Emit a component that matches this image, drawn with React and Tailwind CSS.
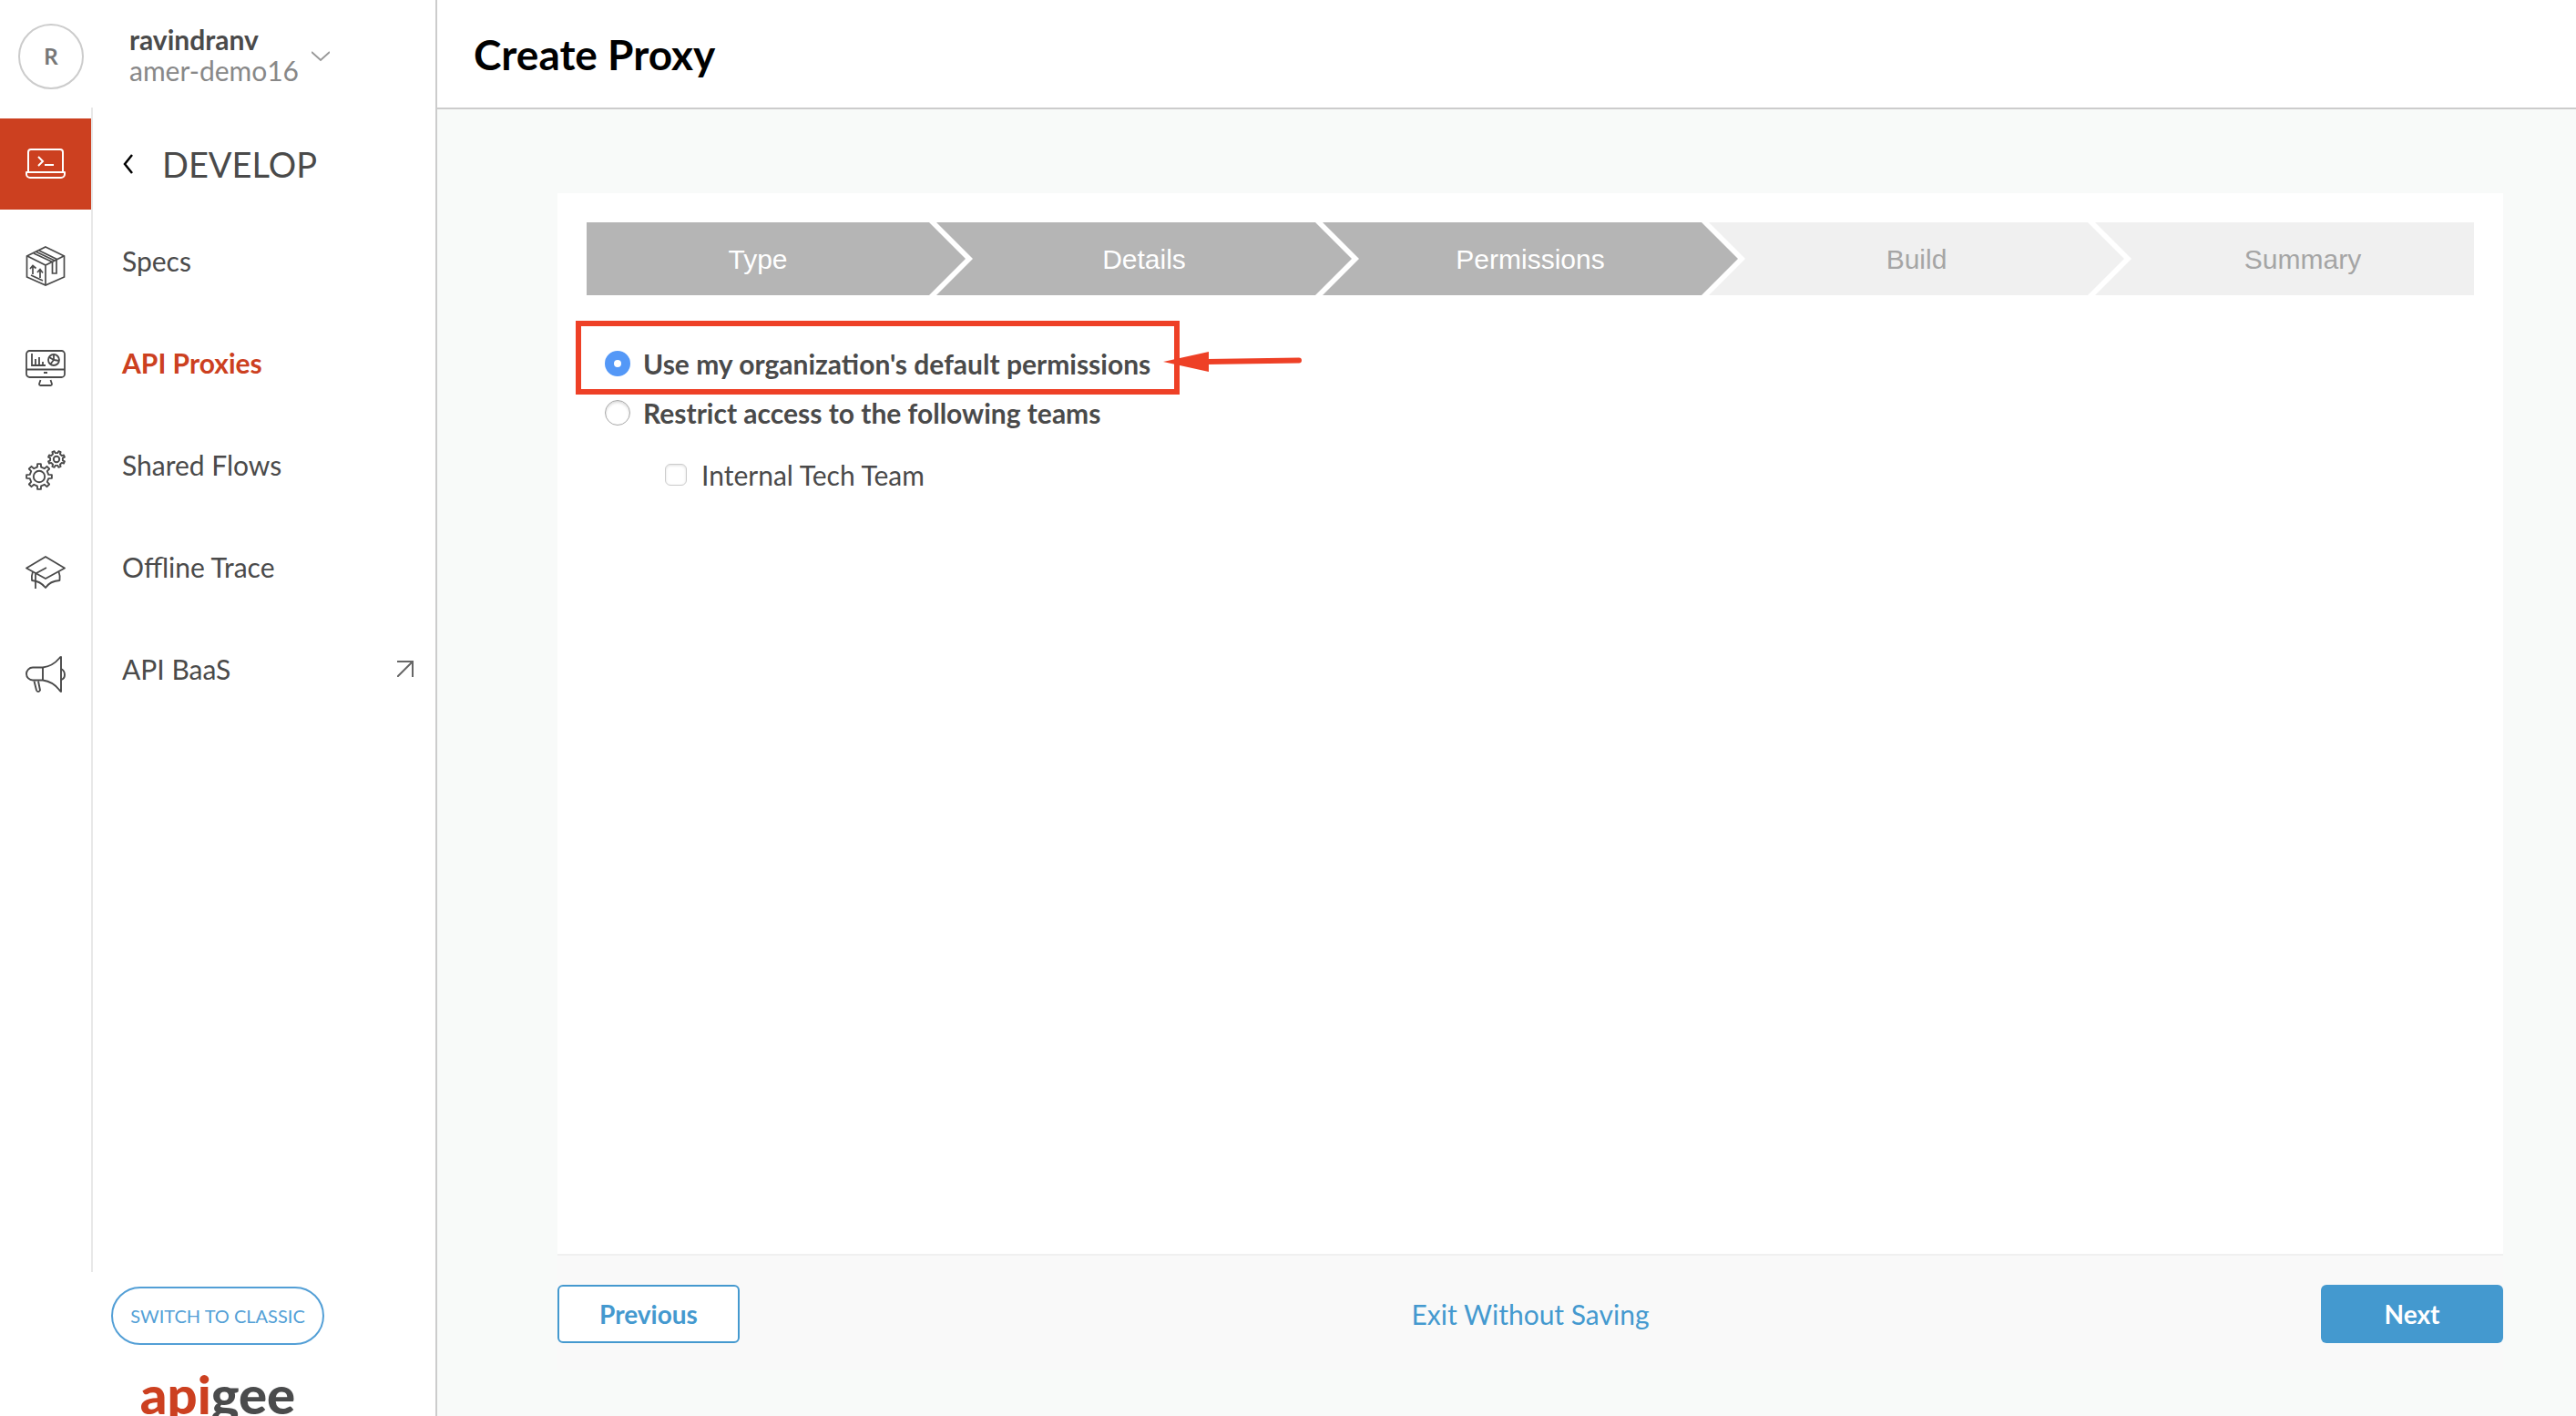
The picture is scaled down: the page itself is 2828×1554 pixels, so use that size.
import React from "react";

const LaptopIcon = () => (
  <svg viewBox="0 0 44 44" className="size-11" fill="none" stroke="currentColor" strokeWidth="2" strokeLinejoin="round">
    <path d="M3 31V9a3 3 0 0 1 3-3h32a3 3 0 0 1 3 3v22" />
    <path d="M1 31h42v2a4 4 0 0 1-4 4H5a4 4 0 0 1-4-4z" />
    <path d="M14 14l5 5-5 5" strokeLinejoin="miter" />
    <path d="M21 23h10" />
  </svg>
);

const BoxIcon = () => (
  <svg viewBox="0 0 44 44" className="size-11" fill="none" stroke="currentColor" strokeWidth="1.7">
    <path d="M22 1L42.500 11v23L22 43 1.500 34V11z" />
    <path d="M2 11l20 10 20-10M22 21v22M15 5l19.500 9.500M9 8l20.500 9.500M12 6.500l20 9.500" />
    <path d="M29.500 17v13H34V14.500" />
    <path d="M8 31V22M5 25L8 21.500l3.500 3M16 35V26M13 29l3-3.500 3 4M6 32l13 6" />
  </svg>
);

const MonitorIcon = () => (
  <svg viewBox="0 0 44 44" className="size-11" fill="none" stroke="currentColor" strokeWidth="1.8">
    <rect x="1" y="3" width="42" height="29" rx="3.500" />
    <path d="M1 23.500h42M20 27h4" />
    <path d="M7 6v13h15M11 19v-7M15 19V10M19 19v-4" />
    <circle cx="31" cy="13" r="6" />
    <path d="M31 7v6l6 1M31 13l-4 5M31 13l-5-3" />
    <path d="M16.500 35l-1.500 4.500q0 1.500 1.500 1.500h11q1.500 0 1.500-1.500L27.500 35" />
  </svg>
);

function gearPath(cx, cy, outer, inner, teeth) {
  const step = (Math.PI * 2) / teeth;
  const pts = [];
  for (let i = 0; i < teeth; i++) {
    const a = i * step - Math.PI / 2;
    [[-0.26, inner], [-0.17, outer], [0.17, outer], [0.26, inner]].forEach(([k, r]) => {
      pts.push(`${(cx + r * Math.cos(a + k * step)).toFixed(2)} ${(cy + r * Math.sin(a + k * step)).toFixed(2)}`);
    });
  }
  return `M${pts.join("L")}Z`;
}

const GearsIcon = () => (
  <svg viewBox="0 0 44 44" className="size-11" fill="none" stroke="currentColor" strokeWidth="1.9" strokeLinejoin="round">
    <path d={gearPath(15, 29, 14, 10.5, 8)} />
    <circle cx="15" cy="29" r="6.200" />
    <path d={gearPath(34, 10, 9.2, 7, 8)} transform="rotate(22.5 34 10)" />
    <circle cx="34" cy="10" r="3.200" />
  </svg>
);

const CapIcon = () => (
  <svg viewBox="0 0 44 44" className="size-11" fill="none" stroke="currentColor" strokeWidth="1.800" strokeLinejoin="round">
    <path d="M22 5l21 12.500L22 29 1 17.500z" />
    <path d="M23 17l-12 6.500V40" />
    <path d="M8 21.500q-1.500 3.500-1 9.500 9 .5 15 8 5-7.500 15.500-8 .5-6-1-9.500" />
  </svg>
);

const MegaphoneIcon = () => (
  <svg viewBox="0 0 44 44" className="size-11" fill="none" stroke="currentColor" strokeWidth="1.900" strokeLinejoin="round">
    <path d="M39 3v38q-1-.3-2-2-7-9-18-10.500H8a7 7 0 0 1 0-14h11Q30 13 37 4.500 38 3 39 3z" />
    <path d="M19 14.500v14M39 16q4 2 4 6.500T39 28M9.500 29.500l2.500 10q.5 1.500 2 1.500t2-1.500L14 29.500" />
  </svg>
);

const rail = [
  { label: "Publish", Icon: BoxIcon },
  { label: "Analyze", Icon: MonitorIcon },
  { label: "Admin", Icon: GearsIcon },
  { label: "Learn", Icon: CapIcon },
  { label: "Announcements", Icon: MegaphoneIcon },
];

const menu = ["Specs", "API Proxies", "Shared Flows", "Offline Trace", "API BaaS"];

const steps = [
  { label: "Type", done: true },
  { label: "Details", done: true },
  { label: "Permissions", done: true },
  { label: "Build", done: false },
  { label: "Summary", done: false },
];

function Sidebar() {
  return (
    <aside className="flex w-[480px] shrink-0 flex-col overflow-hidden border-r-2 border-[#cccccc] bg-white">
      <button type="button" className="flex h-[118px] shrink-0 items-center pt-1.5 pl-5 text-left">
        <span className="flex size-[72px] items-center justify-center rounded-full border-2 border-[#cccccc] text-2xl font-bold text-[#777]">R</span>
        <span className="ml-[50px] pb-1 text-[30px] leading-[34px]">
          <span className="block font-bold text-[#4a4a4a]">ravindranv</span>
          <span className="block text-[#888]">amer-demo16</span>
        </span>
        <svg viewBox="0 0 20 12" className="ml-3.5 h-3 w-5" fill="none" stroke="#999" strokeWidth="2">
          <path d="M0 1l10 9 10-9" />
        </svg>
      </button>
      <div className="flex min-h-0 flex-1">
        <nav aria-label="Sections" className="flex w-[102px] shrink-0 flex-col border-r-2 border-[#e8e8e8] pt-3 text-[#4a4a4a]">
          <a href="#develop" aria-label="Develop" className="flex h-[100px] items-center justify-center bg-[#cc4020] text-white">
            <LaptopIcon />
          </a>
          <div className="pt-1.5">
            {rail.map(({ label, Icon }) => (
              <a key={label} href={"#" + label.toLowerCase()} aria-label={label} className="flex h-28 items-center justify-center">
                <Icon />
              </a>
            ))}
          </div>
        </nav>
        <nav aria-label="Develop" className="flex-1 pt-3 pr-6 pl-8 text-[30px] text-[#4a4a4a]">
          <button type="button" className="flex h-[100px] items-center">
            <svg viewBox="0 0 12 22" className="h-[22px] w-3" fill="none" stroke="#000" strokeWidth="2.500">
              <path d="M11 1L3 11l8 10" />
            </svg>
            <span className="ml-8 text-[38px]">DEVELOP</span>
          </button>
          {menu.map((m) => (
            <a
              key={m}
              href={"#" + m.replace(" ", "-").toLowerCase()}
              className={m === "API Proxies" ? "flex h-28 items-center justify-between font-bold text-[#cc4020]" : "flex h-28 items-center justify-between"}
            >
              {m}
              {m === "API BaaS" && (
                <svg viewBox="0 0 18 18" className="size-[18px]" fill="none" stroke="#666" strokeWidth="2">
                  <path d="M0 1h17v17M17 1L0 18" />
                </svg>
              )}
            </a>
          ))}
        </nav>
      </div>
      <div className="flex h-[158px] shrink-0 flex-col items-center pt-4">
        <button type="button" className="h-16 w-[234px] shrink-0 rounded-[32px] border-2 border-[#539fd6] text-xl text-[#539fd6]">
          SWITCH TO CLASSIC
        </button>
        <div className="mt-4 shrink-0 text-[58px] leading-[76px] font-black text-[#4a4b4c]">
          <span className="text-[#cc4020]">api</span>gee
        </div>
      </div>
    </aside>
  );
}

const stepShapes = [
  "[clip-path:polygon(0_0,calc(100%_-_40px)_0,100%_50%,calc(100%_-_40px)_100%,0_100%)]",
  "[clip-path:polygon(0_0,calc(100%_-_40px)_0,100%_50%,calc(100%_-_40px)_100%,0_100%,40px_50%)]",
];

function Stepper() {
  return (
    <div className="overflow-hidden">
      <ol className="-mx-10 flex h-20 font-['Liberation_Sans',sans-serif] text-[30px]">
        {steps.map((s, i) => (
          <li
            key={s.label}
            aria-current={s.label === "Permissions" ? "step" : undefined}
            className={
              (s.done ? "bg-[#b5b5b5] text-white " : "bg-[#f0f0f0] text-[#a5a5a5] ") +
              (i === 0 ? stepShapes[0] : stepShapes[1] + " -ml-8") +
              " flex flex-1 basis-0 items-center justify-center"
            }
          >
            {s.label}
          </li>
        ))}
      </ol>
    </div>
  );
}

const radioClass =
  "size-7 shrink-0 appearance-none rounded-full border border-[#a8a8a8] bg-white shadow-[inset_0_2px_3px_#dcdcdc] checked:border-[10px] checked:border-[#5498f7] checked:shadow-none";

export default function App() {
  return (
    <div className="flex h-screen overflow-hidden bg-[#f8faf9] font-['Lato',sans-serif] text-[#4a4a4a]">
      <Sidebar />
      <div className="flex min-w-0 flex-1 flex-col">
        <header className="flex h-[120px] shrink-0 items-center border-b-2 border-[#cccccc] bg-white px-10">
          <h1 className="text-[46px] font-bold text-black">Create Proxy</h1>
        </header>
        <main className="flex min-h-0 flex-1 flex-col pt-[92px] pr-20 pl-[132px]">
          <section className="flex-1 border-b-2 border-[#f0f0f0] bg-white p-8">
            <Stepper />
            <fieldset aria-label="Proxy access" className="mt-12 px-5 text-[30px]">
              <div className="relative w-fit">
                <label className="flex h-[54px] items-center gap-3.5 font-bold">
                  <input type="radio" name="permissions" defaultChecked className={radioClass} />
                  Use my organization's default permissions
                </label>
                <div className="pointer-events-none absolute -inset-x-8 -top-5 h-[81px] border-6 border-[#ee4026]" />
                <svg viewBox="0 0 152 22" className="pointer-events-none absolute top-3.5 left-full ml-3.5 h-[22px] w-[152px]">
                  <path d="M0 11L50 0v22z" fill="#ee4026" />
                  <path d="M48 11L149 9.500" stroke="#ee4026" strokeWidth="6" strokeLinecap="round" />
                </svg>
              </div>
              <label className="flex h-[54px] w-fit items-center gap-3.5 font-bold">
                <input type="radio" name="permissions" className={radioClass} />
                Restrict access to the following teams
              </label>
              <label className="mt-3.5 ml-[66px] flex h-[54px] w-fit items-center gap-4">
                <input
                  type="checkbox"
                  className="size-6 shrink-0 appearance-none rounded-md border border-[#cccccc] bg-white shadow-[inset_0_1px_3px_#e0e0e0] checked:bg-[#5498f7]"
                />
                Internal Tech Team
              </label>
            </fieldset>
          </section>
          <footer className="grid h-[126px] shrink-0 grid-cols-3 items-center bg-[#f9f9f9] pt-8 pb-[30px] text-[28px]">
            <button type="button" className="h-16 w-[200px] rounded-md border-2 border-[#4499cf] bg-white font-bold text-[#4499cf]">
              Previous
            </button>
            <a href="#exit" className="justify-self-center text-[30px] text-[#4499cf]">
              Exit Without Saving
            </a>
            <button type="button" className="h-16 w-[200px] justify-self-end rounded-md bg-[#4499cf] font-bold text-white">
              Next
            </button>
          </footer>
          <div className="h-[50px] shrink-0" />
        </main>
      </div>
    </div>
  );
}
